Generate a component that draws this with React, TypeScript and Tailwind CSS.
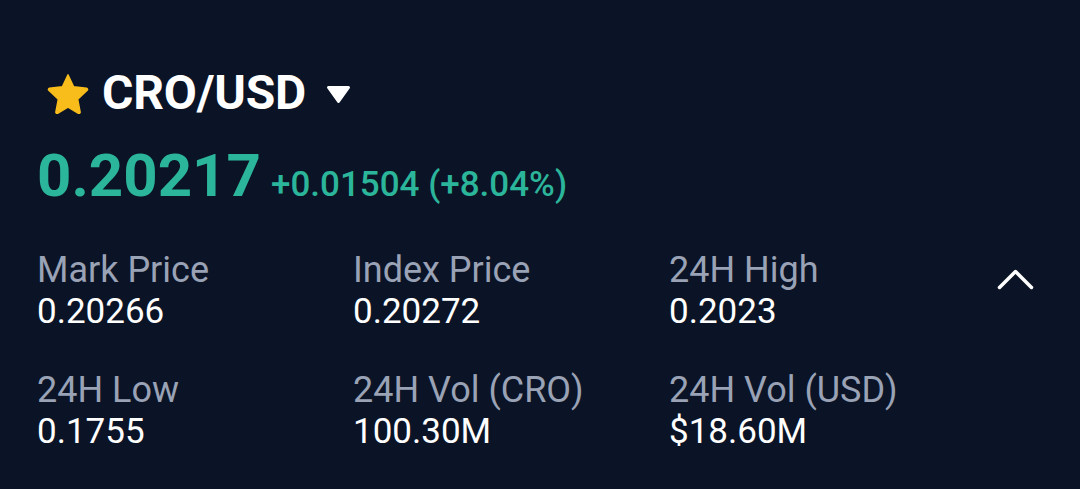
import React from "react";

const stats = [
  { label: "Mark Price", value: "0.20266" },
  { label: "Index Price", value: "0.20272" },
  { label: "24H High", value: "0.2023" },
  { label: "24H Low", value: "0.1755" },
  { label: "24H Vol (CRO)", value: "100.30M" },
  { label: "24H Vol (USD)", value: "$18.60M" },
];

function Stat({ label, value }: { label: string; value: string }) {
  return (
    <div className="flex flex-col">
      <span className="text-[36px] leading-[42px] text-[#9aa2b6]">{label}</span>
      <span className="text-[35px] leading-[42px] text-white">{value}</span>
    </div>
  );
}

export default function App() {
  return (
    <div
      className="w-[1080px] h-[489px] bg-[#0b1426] overflow-hidden pl-[37px] pt-[66px]"
      style={{ fontFamily: "Roboto, 'Noto Sans', sans-serif" }}
    >
      <div className="flex items-center h-[54px]">
        <svg width="42" height="41" viewBox="2 2 20 20" className="ml-[10px] mr-[13px]">
          <path
            d="M12 2.9l2.75 5.8 6.3.78c.48.06.67.65.32.98l-4.64 4.33 1.2 6.25c.1.48-.41.85-.84.62L12 18.6l-5.09 3.06c-.43.23-.94-.14-.84-.62l1.2-6.25-4.64-4.33c-.35-.33-.16-.92.32-.98l6.3-.78L12 2.9z"
            fill="#f8bd1b"
            stroke="#f8bd1b"
            strokeWidth="0.7"
            strokeLinejoin="round"
          />
        </svg>
        <span className="text-[48px] leading-[54px] font-bold text-white tracking-[-0.2px]">CRO/USD</span>
        <svg width="25" height="19" viewBox="0 0 25 19" className="ml-[20px] mt-[2px]">
          <path d="M2.5 2.5 H22.5 L12.5 16.5 Z" fill="#ffffff" stroke="#ffffff" strokeWidth="3" strokeLinejoin="round" />
        </svg>
      </div>
      <div className="flex items-baseline mt-[21px] h-[70px]">
        <span className="text-[60px] leading-[70px] font-bold text-[#2bb59a]">0.20217</span>
        <span className="text-[35px] leading-[70px] font-medium text-[#2bb59a] ml-[10px]">
          +0.01504 (+8.04%)
        </span>
      </div>
      <div className="flex mt-[38px]">
        <div className="grid grid-cols-[316px_316px_316px] gap-y-[36px]">
          {stats.map((s) => (
            <Stat key={s.label} label={s.label} value={s.value} />
          ))}
        </div>
        <div className="flex-1 flex justify-start pl-[12px] pt-[19px]">
          <svg width="37" height="22" viewBox="0 0 37 22">
            <path d="M2.5 19.5 L18.5 3.5 L34.5 19.5" fill="none" stroke="#ffffff" strokeWidth="3.5" strokeLinecap="round" strokeLinejoin="round" />
          </svg>
        </div>
      </div>
    </div>
  );
}
